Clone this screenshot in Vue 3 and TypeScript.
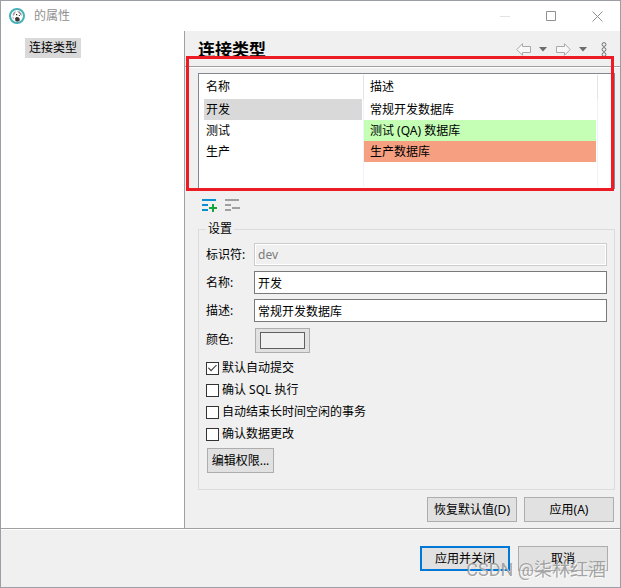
<script setup lang="ts">
import { ref } from 'vue'

interface ConnectionType {
  id: string
  name: string
  description: string
  tone: string
}

interface Option {
  id: string
  label: string
  checked: boolean
}

const types: ConnectionType[] = [
  { id: 'dev', name: '开发', description: '常规开发数据库', tone: 'plain' },
  { id: 'test', name: '测试', description: '测试 (QA) 数据库', tone: 'green' },
  { id: 'prod', name: '生产', description: '生产数据库', tone: 'red' },
]

const selectedId = ref('dev')
const form = ref({ id: 'dev', name: '开发', description: '常规开发数据库' })

const options = ref<Option[]>([
  { id: 'auto-commit', label: '默认自动提交', checked: true },
  { id: 'confirm-sql', label: '确认 SQL 执行', checked: false },
  { id: 'auto-close', label: '自动结束长时间空闲的事务', checked: false },
  { id: 'confirm-data', label: '确认数据更改', checked: false },
])

function select(item: ConnectionType) {
  selectedId.value = item.id
  form.value = { id: item.id, name: item.name, description: item.description }
}
</script>

<template>
  <div class="window">
    <header class="titlebar">
      <svg class="logo" viewBox="0 0 16 16" aria-hidden="true">
        <circle cx="8" cy="8" r="7" fill="#fff" stroke="#45b0b8" stroke-width="2" />
        <path d="M3.500 6.500 5 4l2-.8L6 5.500 4.600 8z" fill="#a39d9a" />
        <path d="M8 3.200 10.500 3.500 12.300 5.500 12.600 8 11.300 6.800 10 5z" fill="#8b8582" />
        <path d="M6 10.500 7.200 9 9.300 9.200 10.600 10.400 10.800 12.600 8.500 13.700 6.500 13z" fill="#3d3532" />
        <path d="M7 6h1.200v1.200H7zM9.800 7h1.100v1.100H9.800zM3.300 8.500l1.200 1.200-.2 1.200z" fill="#302a28" />
      </svg>
      <span class="title">的属性</span>
      <div class="window-buttons">
        <button type="button" aria-label="最小化" disabled>
          <svg viewBox="0 0 11 11"><path d="M0 5.500h10" stroke="#e2e2e2" /></svg>
        </button>
        <button type="button" aria-label="最大化">
          <svg viewBox="0 0 11 11"><path d="M.5.5h9v9h-9z" fill="none" stroke="#909090" /></svg>
        </button>
        <button type="button" aria-label="关闭">
          <svg viewBox="0 0 11 11"><path d="M.5.5l10 10M10.500.5l-10 10" stroke="#909090" /></svg>
        </button>
      </div>
    </header>

    <div class="body">
      <nav class="tree">
        <a href="#connection-types" class="tree-item">连接类型</a>
      </nav>

      <main id="connection-types" class="page">
        <div class="page-header">
          <h1>连接类型</h1>
          <div class="history">
            <button type="button" class="arrow" aria-label="后退">
              <svg viewBox="0 0 15 13">
                <path d="M.8 6.500 6.500.7v2.800h8v6h-8v2.800z" fill="#f8f8f8" stroke="#a9a9a9" />
              </svg>
            </button>
            <button type="button" class="caret" aria-label="后退历史">
              <svg viewBox="0 0 8 5"><path d="M0 0h8L4 4.500z" fill="#6b6b70" /></svg>
            </button>
            <button type="button" class="arrow" aria-label="前进">
              <svg viewBox="0 0 15 13">
                <path d="M14.200 6.500 8.500.7v2.800h-8v6h8v2.800z" fill="#f8f8f8" stroke="#a9a9a9" />
              </svg>
            </button>
            <button type="button" class="caret" aria-label="前进历史">
              <svg viewBox="0 0 8 5"><path d="M0 0h8L4 4.500z" fill="#6b6b70" /></svg>
            </button>
            <button type="button" class="more" aria-label="菜单">
              <svg viewBox="0 0 6 15">
                <g fill="#f4f4f4" stroke="#707070">
                  <circle cx="3" cy="2.500" r="1.900" />
                  <circle cx="3" cy="7.500" r="1.900" />
                  <circle cx="3" cy="12.500" r="1.900" />
                </g>
              </svg>
            </button>
          </div>
        </div>

        <div class="page-content">
          <div class="list-area">
            <div class="list">
              <table>
                <colgroup>
                  <col class="name-col" />
                  <col />
                </colgroup>
                <thead>
                  <tr>
                    <th scope="col">名称</th>
                    <th scope="col">描述</th>
                  </tr>
                </thead>
                <tbody>
                  <tr
                    v-for="item in types"
                    :key="item.id"
                    :class="{ selected: item.id === selectedId }"
                    @click="select(item)"
                  >
                    <td>{{ item.name }}</td>
                    <td :class="item.tone">{{ item.description }}</td>
                  </tr>
                  <tr class="filler">
                    <td></td>
                    <td></td>
                  </tr>
                </tbody>
              </table>
            </div>
            <div class="highlight"></div>
          </div>

          <div class="toolbar">
            <button type="button" aria-label="添加">
              <svg viewBox="0 0 16 14">
                <path d="M0 0h14v2H0zM0 5h6v2H0zM0 10h6v2H0z" fill="#0a8fd0" />
                <path d="M10 5h2v3h3v2h-3v3h-2v-3H7V8h3z" fill="#12a63a" />
              </svg>
            </button>
            <button type="button" aria-label="删除">
              <svg viewBox="0 0 16 14">
                <path d="M0 0h14v2H0zM0 5h6v2H0zM0 10h6v2H0zM7 8h8v2H7z" fill="#a0a0a0" />
              </svg>
            </button>
          </div>

          <fieldset>
            <legend>设置</legend>
            <div class="fields">
              <label for="type-id">标识符:</label>
              <input id="type-id" v-model="form.id" type="text" disabled />
              <label for="type-name">名称:</label>
              <input id="type-name" v-model="form.name" type="text" />
              <label for="type-description">描述:</label>
              <input id="type-description" v-model="form.description" type="text" />
              <label for="type-color">颜色:</label>
              <button id="type-color" type="button" class="color-button"><span></span></button>
            </div>
            <div class="options">
              <label v-for="option in options" :key="option.id" :for="option.id">
                <input :id="option.id" v-model="option.checked" type="checkbox" />
                {{ option.label }}
              </label>
            </div>
            <button type="button" class="push edit">编辑权限...</button>
          </fieldset>

          <div class="actions">
            <button type="button" class="push">恢复默认值(D)</button>
            <button type="button" class="push">应用(A)</button>
          </div>
        </div>
      </main>
    </div>

    <footer class="footer">
      <button type="button" class="push primary">应用并关闭</button>
      <button type="button" class="push">取消</button>
      <span class="watermark">CSDN @柒林红酒</span>
    </footer>
  </div>
</template>

<style>
body {
  margin: 0;
}
</style>

<style scoped>
* {
  box-sizing: border-box;
}

.window {
  display: flex;
  flex-direction: column;
  min-height: 100vh;
  border: 1px solid #9b9fa5;
  background: #f0f0f0;
  color: #000;
  font: 12px/16px "Noto Sans", "Noto Sans CJK SC", sans-serif;
}

button,
input {
  margin: 0;
  padding: 0;
  border: 0;
  border-radius: 0;
  background: none;
  color: inherit;
  font: inherit;
}

svg {
  display: block;
}

.titlebar {
  display: flex;
  align-items: center;
  height: 30px;
  padding-left: 8px;
  background: #fff;
}

.logo {
  width: 16px;
  height: 16px;
}

.title {
  margin-left: 9px;
  color: #909090;
}

.window-buttons {
  display: flex;
  margin-left: auto;
}

.window-buttons button {
  display: grid;
  place-items: center;
  width: 46px;
  height: 28px;
}

.window-buttons svg {
  width: 11px;
  height: 11px;
}

.body {
  display: flex;
  flex: 1;
  border-bottom: 1px solid #a0a0a0;
}

.tree {
  width: 184px;
  padding: 7px 24px;
  border-right: 1px solid #a0a0a0;
  background: #fff;
}

.tree-item {
  display: inline-block;
  padding: 2px 4px;
  background: #d9d9d9;
  color: #000;
  text-decoration: none;
}

.page {
  display: flex;
  flex: 1;
  flex-direction: column;
  min-width: 0;
}

.page-header {
  display: flex;
  align-items: center;
  justify-content: space-between;
  height: 37px;
  padding: 1px 13px 0;
  border-bottom: 1px solid #fff;
  box-shadow: inset 0 -1px #a0a0a0;
}

h1 {
  margin: 0;
  font-size: 17px;
  font-weight: 700;
  line-height: 24px;
}

.history {
  display: flex;
  align-items: center;
}

.arrow svg {
  width: 15px;
  height: 13px;
}

.caret {
  padding: 0 9px 0 8px;
}

.caret svg {
  width: 8px;
  height: 5px;
}

.more {
  padding: 0 0 0 5px;
}

.more svg {
  width: 6px;
  height: 15px;
}

.page-content {
  display: flex;
  flex: 1;
  flex-direction: column;
  padding: 5px 5px 6px 13px;
}

.list-area {
  position: relative;
  display: flex;
  flex: 1;
  min-height: 116px;
}

.list {
  display: flex;
  flex: 1;
  padding: 1px 16px 1px 5px;
  border: 1px solid #828790;
  background: #fff;
}

.highlight {
  position: absolute;
  inset: -17px 1px -2px -12px;
  border: 3px solid #ed1c24;
  pointer-events: none;
}

table {
  width: 100%;
  table-layout: fixed;
  border-collapse: separate;
  border-spacing: 0;
}

.name-col {
  width: 160px;
}

th,
td {
  height: 21px;
  padding: 0 6px;
  border-right: 1px solid #edf3fb;
  box-shadow: inset -1px 0 #fff;
  font-weight: 400;
  text-align: left;
}

th {
  height: 24px;
  border-right-color: #e3e3e3;
}

th:first-child,
td:first-child {
  padding-left: 2px;
}

.selected td:first-child {
  background: #d9d9d9;
}

.green {
  background: #c4ffb5;
}

.red {
  background: #f79f81;
}

.filler td {
  height: auto;
}

.toolbar {
  display: flex;
  gap: 7px;
  height: 32px;
  padding: 10px 4px 0;
}

.toolbar button {
  height: 14px;
}

.toolbar svg {
  width: 16px;
  height: 14px;
}

fieldset {
  min-width: 0;
  margin: 0;
  padding: 6px 7px 16px;
  border: 1px solid #dcdcdc;
}

legend {
  padding: 0 2px;
}

.fields {
  display: grid;
  grid-template-columns: 43px 1fr;
  row-gap: 5px;
  column-gap: 5px;
  align-items: center;
}

.fields input {
  width: 100%;
  height: 23px;
  padding: 0 3px;
  border: 1px solid #7a7a7a;
  background: #fff;
}

.fields input:disabled {
  border-color: #ccc;
  outline: 1px solid #fff;
  outline-offset: -2px;
  background: #f0f0f0;
  color: #7b7b7b;
}

.color-button {
  display: grid;
  place-items: center;
  width: 55px;
  height: 25px;
  margin: 1px 0 0 1px;
  border: 1px solid #adadad;
  background: #e1e1e1;
}

.color-button span {
  width: 45px;
  height: 17px;
  border: 1px solid #606060;
  background: #f0f0f0;
}

.options {
  display: grid;
  padding: 4px 0 3px;
}

.options label {
  display: flex;
  align-items: center;
  gap: 3px;
  height: 22px;
}

.options input {
  display: grid;
  place-items: center;
  width: 13px;
  height: 13px;
  border: 1px solid #333;
  background: #fff;
  appearance: none;
}

.options input:checked::after {
  width: 9px;
  height: 7px;
  background: #444;
  clip-path: polygon(0 52%, 8% 40%, 34% 76%, 92% 0, 100% 10%, 34% 100%);
  content: "";
}

.push {
  width: 90px;
  height: 25px;
  border: 1px solid #adadad;
  background: #e1e1e1;
  white-space: nowrap;
}

.edit {
  width: 67px;
  margin-left: 1px;
}

.primary {
  border: 2px solid #0078d7;
}

.actions {
  display: flex;
  justify-content: flex-end;
  gap: 7px;
  margin-top: 7px;
  padding-right: 1px;
}

.footer {
  position: relative;
  display: flex;
  justify-content: flex-end;
  gap: 8px;
  height: 58px;
  padding: 16px 12px 0;
  border-top: 1px solid #fff;
}

.watermark {
  position: absolute;
  right: 14px;
  bottom: 5px;
  color: rgb(150 150 150 / 85%);
  font-family: Roboto, "Noto Sans CJK SC", sans-serif;
  font-size: 18px;
  line-height: 24px;
  text-shadow: 1px 1px rgb(255 255 255 / 70%);
  pointer-events: none;
}
</style>
